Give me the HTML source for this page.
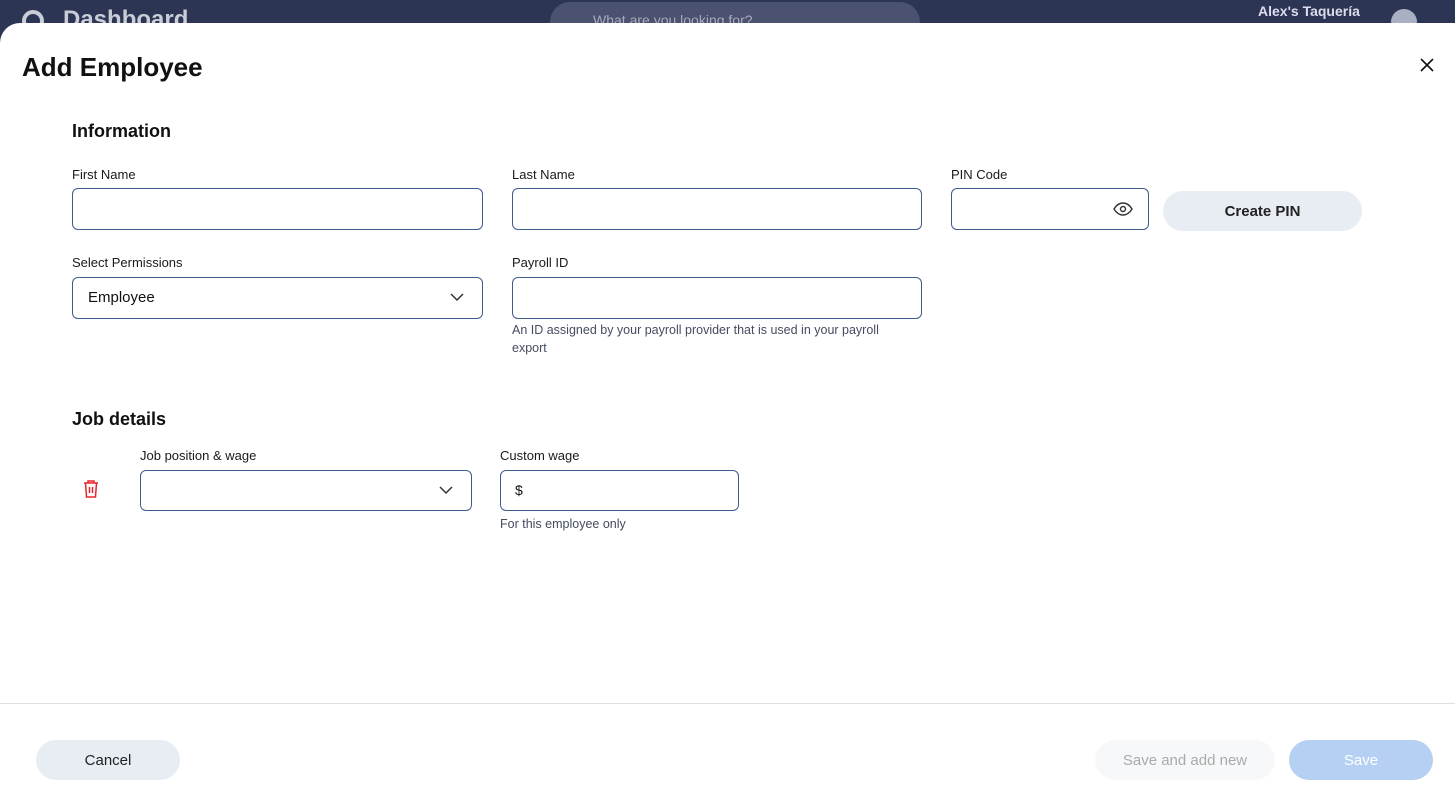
<!DOCTYPE html>
<html><head><style>
*{box-sizing:border-box;margin:0;padding:0}
body{width:1455px;height:797px;overflow:hidden;background:#2c3554;font-family:"Liberation Sans",sans-serif;position:relative;color:#111}
.a{position:absolute}
.modal{position:absolute;left:0;top:23px;width:1455px;height:774px;background:#fff;border-radius:20px 0 0 0}
.lbl{position:absolute;font-size:13px;color:#1a1a1a}
.inp{position:absolute;height:42px;border:1px solid #3f5a8c;border-radius:6px;background:#fff}
.hint{position:absolute;font-size:12.5px;color:#444c60;line-height:18px}
h2{position:absolute;font-size:18px;font-weight:bold;color:#111}
.btn{position:absolute;height:40px;border-radius:20px;font-size:15px;display:flex;align-items:center;justify-content:center}
</style></head><body>
<div class="a" style="left:22px;top:10px;width:22px;height:22px;border-radius:50%;border:4px solid #c8cdd8"></div>
<div class="a" style="left:63px;top:6px;font-size:24px;font-weight:bold;color:#c8cdd8">Dashboard</div>
<div class="a" style="left:550px;top:2px;width:370px;height:40px;border-radius:20px;background:#4a5270"></div>
<div class="a" style="left:593px;top:12px;font-size:14px;color:#aab">What are you looking for?</div>
<div class="a" style="left:1258px;top:3px;font-size:14px;font-weight:bold;color:#dde">Alex's Taquería</div>
<div class="a" style="left:1391px;top:9px;width:26px;height:26px;border-radius:50%;background:#aab0c4"></div>
<div class="modal">
<div class="a" style="left:22px;top:29px;font-size:26px;font-weight:bold">Add Employee</div>
<svg class="a" style="left:1420px;top:35px" width="14" height="14" viewBox="0 0 14 14"><path d="M1 1L13 13M13 1L1 13" stroke="#111" stroke-width="1.6"/></svg>
<h2 style="left:72px;top:98px">Information</h2>
<div class="lbl" style="left:72px;top:144px">First Name</div>
<div class="inp" style="left:72px;top:165px;width:411px"></div>
<div class="lbl" style="left:512px;top:144px">Last Name</div>
<div class="inp" style="left:512px;top:165px;width:410px"></div>
<div class="lbl" style="left:951px;top:144px">PIN Code</div>
<div class="inp" style="left:951px;top:165px;width:198px"></div>
<svg class="a" style="left:1113px;top:178px" width="20" height="16" viewBox="0 0 20 16"><path d="M1 8C4 3 7 2 10 2S16 3 19 8C16 13 13 14 10 14S4 13 1 8Z" fill="none" stroke="#333" stroke-width="1.4"/><circle cx="10" cy="8" r="2.5" fill="none" stroke="#333" stroke-width="1.4"/></svg>
<div class="btn" style="left:1163px;top:168px;width:199px;background:#e8ecf3;font-weight:bold;color:#222">Create PIN</div>
<div class="lbl" style="left:72px;top:232px">Select Permissions</div>
<div class="inp" style="left:72px;top:254px;width:411px"></div>
<div class="a" style="left:88px;top:266px;font-size:15px">Employee</div>
<svg class="a" style="left:450px;top:270px" width="14" height="9" viewBox="0 0 14 9"><path d="M1 1L7 7L13 1" fill="none" stroke="#333" stroke-width="1.5"/></svg>
<div class="lbl" style="left:512px;top:232px">Payroll ID</div>
<div class="inp" style="left:512px;top:254px;width:410px"></div>
<div class="hint" style="left:512px;top:298px;width:370px">An ID assigned by your payroll provider that is used in your payroll export</div>
<h2 style="left:72px;top:386px">Job details</h2>
<svg class="a" style="left:82px;top:456px" width="18" height="20" viewBox="0 0 18 20"><path d="M2 4H16M6 4V2H12V4M3.5 4L4.5 18H13.5L14.5 4M7.5 8V14M10.5 8V14" fill="none" stroke="#e6252b" stroke-width="1.5"/></svg>
<div class="lbl" style="left:140px;top:425px">Job position &amp; wage</div>
<div class="inp" style="left:140px;top:447px;width:332px;height:41px"></div>
<svg class="a" style="left:439px;top:463px" width="14" height="9" viewBox="0 0 14 9"><path d="M1 1L7 7L13 1" fill="none" stroke="#333" stroke-width="1.5"/></svg>
<div class="lbl" style="left:500px;top:425px">Custom wage</div>
<div class="inp" style="left:500px;top:447px;width:239px;height:41px"></div>
<div class="a" style="left:515px;top:459px;font-size:14px">$</div>
<div class="hint" style="left:500px;top:492px">For this employee only</div>
<div class="a" style="left:0;top:680px;width:1455px;height:1px;background:#dde0e6"></div>
<div class="btn" style="left:36px;top:717px;width:144px;background:#e8ecf3;color:#222">Cancel</div>
<div class="btn" style="left:1095px;top:717px;width:180px;background:#f7f8fa;color:#aaa">Save and add new</div>
<div class="btn" style="left:1289px;top:717px;width:144px;background:#b5d0f3;color:#fff">Save</div>
</div>
</body></html>
